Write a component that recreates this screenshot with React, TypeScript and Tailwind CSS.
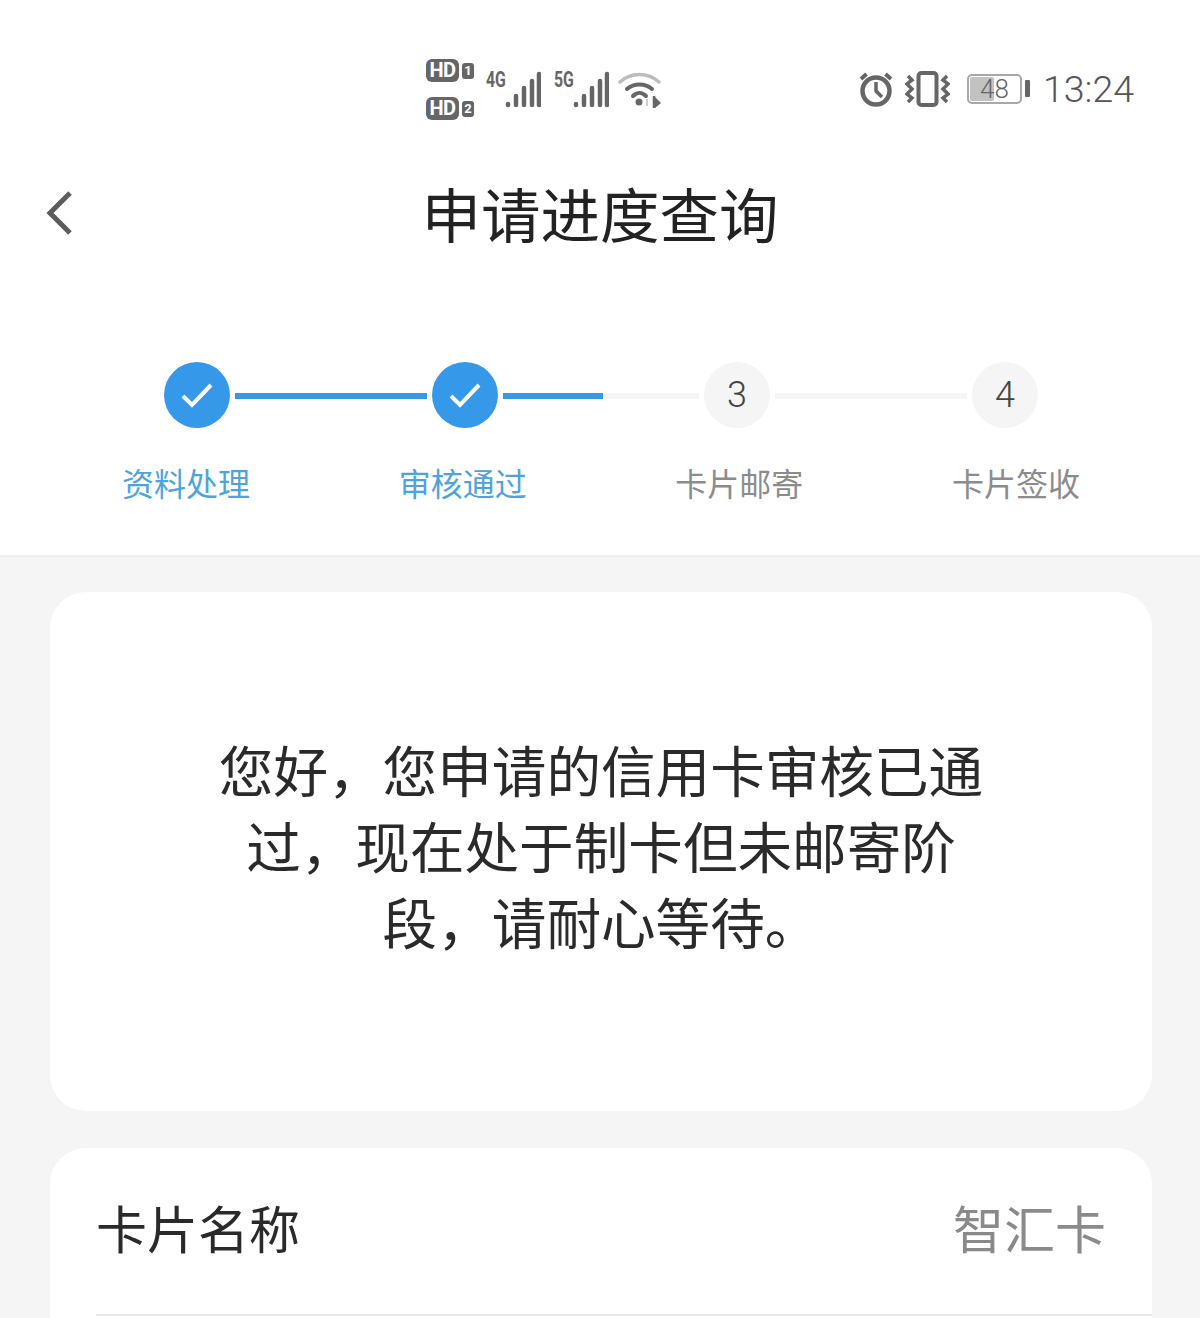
const cjk = "font-['Noto_Sans_CJK_SC','Noto_Sans',sans-serif]";

function SimCard({ n }: { n: string }) {
  return (
    <div className="flex items-center gap-[3px] h-[23px]">
      <span className="w-[33px] h-[23px] rounded-[6px] bg-[#666] text-white text-[20px] leading-[23px] font-bold text-center font-['Roboto',sans-serif] tracking-[-0.5px]">HD</span>
      <span className="w-[12px] h-[16px] rounded-[3px] bg-[#666] text-white text-[13px] leading-[16px] font-bold text-center font-['Roboto',sans-serif]">{n}</span>
    </div>
  );
}

function Signal({ label }: { label: string }) {
  return (
    <div className="relative w-[55px] h-[38px]">
      <span className="absolute left-0 top-[-3px] text-[#666] text-[22px] leading-[24px] font-bold font-['Roboto',sans-serif] scale-x-[0.72] origin-left">{label}</span>
      <svg className="absolute left-[19px] top-0" width="36" height="38" viewBox="0 0 36 38">
        <g stroke="#666" strokeWidth="4.5" strokeLinecap="round">
          <path d="M3 33v1" />
          <path d="M11 25v9" />
          <path d="M19 17v17" />
          <path d="M27 10v24" />
          <path d="M34 3v31" />
        </g>
      </svg>
    </div>
  );
}

function Wifi() {
  return (
    <svg width="44" height="38" viewBox="0 0 44 38" fill="none">
      <path d="M2 11C13 1 30 1 41 11" stroke="#bdbdbd" strokeWidth="3.5" strokeLinecap="round" />
      <path d="M9 18C16 12 27 12 34 18" stroke="#666" strokeWidth="4" strokeLinecap="round" />
      <path d="M15 25C19 21 24 21 28 25" stroke="#666" strokeWidth="4" strokeLinecap="round" />
      <circle cx="21" cy="31" r="3.5" fill="#666" />
      <path d="M29 28v7" stroke="#ccc" strokeWidth="2" />
      <path d="M36 25v12" stroke="#666" strokeWidth="2.5" />
      <path d="M37 26l6 6-6 5z" fill="#666" />
    </svg>
  );
}

function Alarm() {
  return (
    <svg width="36" height="36" viewBox="0 0 36 36" fill="none" stroke="#666">
      <circle cx="18" cy="20" r="13.5" strokeWidth="4.5" />
      <path d="M18 11v9l6 6" strokeWidth="3.5" />
      <path d="M3 8 8.5 3M33 8 27.5 3" strokeWidth="4" />
    </svg>
  );
}

function Vibrate() {
  return (
    <svg width="45" height="36" viewBox="0 0 45 36" fill="none" stroke="#666">
      <rect x="13.5" y="2" width="18" height="32" rx="3" strokeWidth="4" />
      <path d="M3 5 7 9 2 13 7 18 2 23 7 27 3 31" strokeWidth="3.5" />
      <path d="M42 5 38 9 43 13 38 18 43 23 38 27 42 31" strokeWidth="3.5" />
    </svg>
  );
}

function Battery() {
  return (
    <div className="flex items-center gap-[3px]">
      <div className="relative w-[55px] h-[30px] rounded-[5px] border-2 border-[#a8a8a8]">
        <div className="absolute left-[1px] top-[1px] bottom-[1px] w-[24px] rounded-[2px] bg-[#c2c2c2]" />
        <span className="absolute inset-0 text-center text-[#666] text-[26px] leading-[26px] font-light font-['Roboto',sans-serif]">48</span>
      </div>
      <div className="w-[5px] h-[17px] rounded-[1px] bg-[#666]" />
    </div>
  );
}

function StatusBar() {
  return (
    <div className="flex items-center justify-between h-[119px] pt-[60px] pl-[426px] pr-[66px]">
      <div className="flex items-center">
        <div className="flex flex-col gap-[15px] mr-[12px]">
          <SimCard n="1" />
          <SimCard n="2" />
        </div>
        <Signal label="4G" />
        <div className="w-[13px]" />
        <Signal label="5G" />
        <div className="w-[9px]" />
        <Wifi />
      </div>
      <div className="flex items-center -mt-[2px]">
        <Alarm />
        <div className="w-[11px]" />
        <Vibrate />
        <div className="w-[17px]" />
        <Battery />
        <div className="w-[13px]" />
        <span className="text-[37.5px] leading-[44px] text-[#555] font-light font-['Roboto',sans-serif]">13:24</span>
      </div>
    </div>
  );
}

function Check() {
  return (
    <div className="w-[66px] h-[66px] shrink-0 rounded-full bg-[#3598e8] flex items-center justify-center">
      <svg width="34" height="28" viewBox="0 0 34 28" fill="none" stroke="white" strokeWidth="4">
        <path d="M3 15l9 9L31 4" />
      </svg>
    </div>
  );
}

function Num({ n }: { n: string }) {
  return (
    <div className="w-[66px] h-[66px] shrink-0 rounded-full bg-[#f5f5f5] flex items-center justify-center text-[36px] text-[#444] font-['Roboto',sans-serif] font-light">
      {n}
    </div>
  );
}

function Steps() {
  return (
    <div className="pt-[67px]">
      <div className="flex items-center pl-[164px] gap-[5px]">
        <Check />
        <div className="w-[192px] h-[6px] translate-y-px bg-[#3598e8]" />
        <Check />
        <div className="w-[196px] h-[6px] translate-y-px flex">
          <div className="w-[100px] bg-[#3598e8]" />
          <div className="flex-1 bg-[#f5f5f5]" />
        </div>
        <Num n="3" />
        <div className="w-[192px] h-[6px] translate-y-px bg-[#f5f5f5]" />
        <Num n="4" />
      </div>
      <div className={`flex justify-between pl-[122px] pr-[120px] mt-[30px] text-[32px] leading-[48px] ${cjk}`}>
        <span className="text-[#4fa3dc]">资料处理</span>
        <span className="text-[#4fa3dc]">审核通过</span>
        <span className="text-[#8c8c8c]">卡片邮寄</span>
        <span className="text-[#8c8c8c]">卡片签收</span>
      </div>
    </div>
  );
}

export default function App() {
  return (
    <div className={`h-[1318px] overflow-hidden bg-[#f5f5f5] ${cjk}`}>
      <header className="bg-white h-[555px] shadow-[0_1px_3px_rgba(0,0,0,0.06)]">
        <StatusBar />
        <div className="relative h-[176px] flex items-start justify-center">
          <svg className="absolute left-[44px] top-[70px]" width="30" height="50" viewBox="0 0 30 50" fill="none" stroke="#5c5c5c" strokeWidth="5">
            <path d="M26 4 6 24l20 20" />
          </svg>
          <h1 className="mt-[50px] text-[59.5px] leading-[86px] text-[#222] font-normal">申请进度查询</h1>
        </div>
        <Steps />
      </header>

      <main className="pl-[50px] pr-[48px] pt-[37px] flex flex-col gap-[37px]">
        <section className="bg-white rounded-[36px] h-[519px] flex items-center justify-center pb-[14px]">
          <p className="w-[780px] text-center text-[54.6px] leading-[76px] text-[#2a2a2a]">
            您好，您申请的信用卡审核已通过，现在处于制卡但未邮寄阶段，请耐心等待。
          </p>
        </section>
        <section className="bg-white rounded-t-[36px] h-[300px] pl-[46px]">
          <div className="flex items-center justify-between h-[168px] border-b-2 border-[#e8e8e8] pr-[46px] pb-[8px] text-[51px]">
            <span className="text-[#2a2a2a]">卡片名称</span>
            <span className="text-[#8a8a8a]">智汇卡</span>
          </div>
        </section>
      </main>
    </div>
  );
}
